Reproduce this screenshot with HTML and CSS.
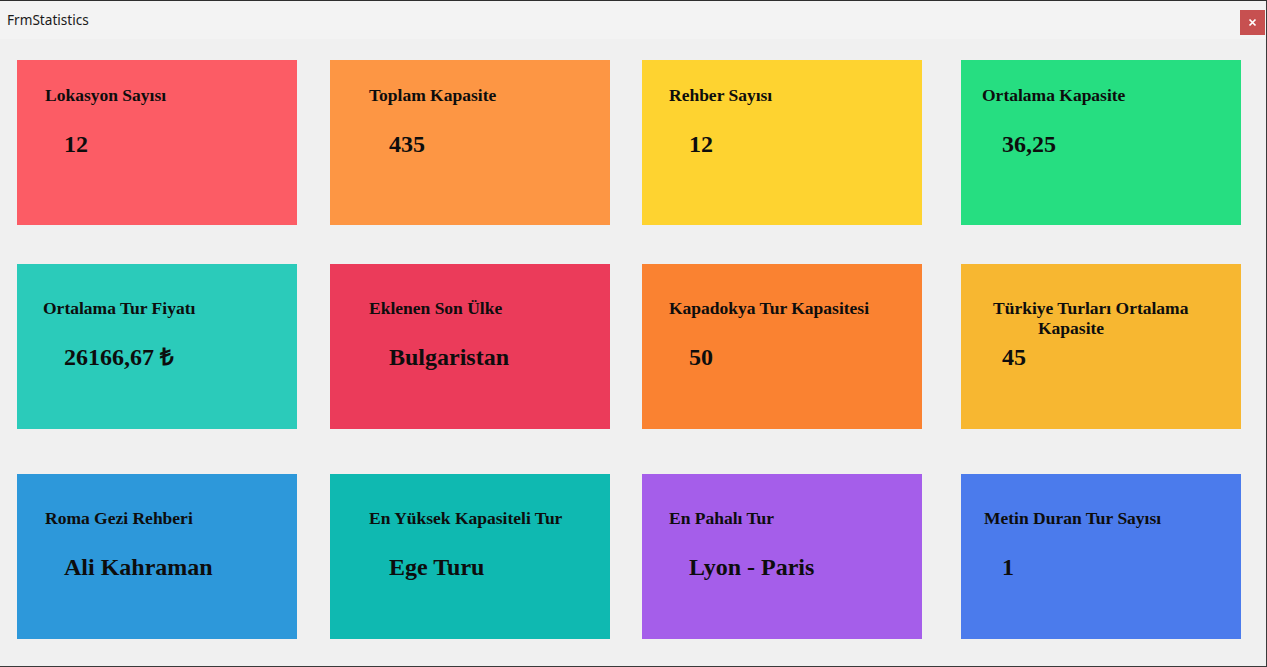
FILE: index.html
```html
<!DOCTYPE html>
<html lang="tr">
<head>
<meta charset="utf-8">
<title>FrmStatistics</title>
<link rel="stylesheet" href="styles.css">
</head>
<body>
<div class="window">
  <div class="titlebar">
    <span class="caption">FrmStatistics</span>
    <button class="close" aria-label="Kapat">
      <svg width="25" height="25" viewBox="0 0 25 25"><path d="M9.5 9.5 L15.5 15.5 M15.5 9.5 L9.5 15.5" stroke="#fff" stroke-width="1.7" fill="none"/></svg>
    </button>
  </div>
  <div class="grid">
    <div class="card r1 c1 red"><div class="title">Lokasyon Sayısı</div><div class="value">12</div></div>
    <div class="card r1 c2 orange"><div class="title">Toplam Kapasite</div><div class="value">435</div></div>
    <div class="card r1 c3 yellow"><div class="title">Rehber Sayısı</div><div class="value">12</div></div>
    <div class="card r1 c4 green"><div class="title">Ortalama Kapasite</div><div class="value">36,25</div></div>

    <div class="card r2 c1 teal t-left2"><div class="title">Ortalama Tur Fiyatı</div><div class="value">26166,67 ₺</div></div>
    <div class="card r2 c2 crimson"><div class="title">Eklenen Son Ülke</div><div class="value">Bulgaristan</div></div>
    <div class="card r2 c3 dorange"><div class="title">Kapadokya Tur Kapasitesi</div><div class="value">50</div></div>
    <div class="card r2 c4 amber t-wide"><div class="title">Türkiye Turları Ortalama<br><span class="indent">Kapasite</span></div><div class="value">45</div></div>

    <div class="card r3 c1 blue"><div class="title">Roma Gezi Rehberi</div><div class="value">Ali Kahraman</div></div>
    <div class="card r3 c2 sea"><div class="title">En Yüksek Kapasiteli Tur</div><div class="value">Ege Turu</div></div>
    <div class="card r3 c3 purple"><div class="title">En Pahalı Tur</div><div class="value">Lyon - Paris</div></div>
    <div class="card r3 c4 indigo t-left3"><div class="title">Metin Duran Tur Sayısı</div><div class="value">1</div></div>
  </div>
</div>
</body>
</html>
```

FILE: styles.css
```css
* { box-sizing: border-box; }
html, body { margin: 0; padding: 0; }
body {
  width: 1267px;
  height: 667px;
  overflow: hidden;
  background: #f0f0f0;
}
.window {
  width: 1267px;
  height: 667px;
  border-top: 1px solid #2e2e2e;
  border-right: 1px solid #3a3a3a;
  border-bottom: 1px solid #3a3a3a;
  background: #f0f0f0;
  display: flex;
  flex-direction: column;
}
.titlebar {
  height: 38px;
  background: #f3f3f3;
  display: flex;
  justify-content: space-between;
  align-items: flex-start;
  padding: 9px 1px 0 7px;
  flex: none;
}
.caption {
  font-family: "Noto Sans", "Open Sans", sans-serif;
  font-size: 13.6px;
  line-height: 18px;
  color: #1a1a1a;
  margin-top: 1px;
}
.close {
  width: 25px;
  height: 25px;
  padding: 0;
  border: 0;
  background: #c75050;
  display: block;
}
.close svg { display: block; }

.grid {
  display: grid;
  grid-template-columns: 313px 312px 319px 280px;
  grid-template-rows: 204px 210px 165px;
  padding: 21px 0 0 17px;
}
.card {
  width: 280px;
  height: 165px;
  font-family: "Liberation Serif", "Times New Roman", serif;
  font-weight: bold;
  color: #0d0d0d;
  padding-top: 34px;
  display: flex;
  flex-direction: column;
  align-items: flex-start;
}
.card.r1 { padding-top: 25px; }
.title {
  font-size: 17.5px;
  line-height: 20px;
  height: 20px;
  white-space: nowrap;
}
.value {
  font-size: 24px;
  line-height: 28px;
  margin-top: 25px;
  white-space: nowrap;
}
.indent { display: inline-block; padding-left: 45px; }

.c1 { padding-left: 28px; }
.c1 .value { margin-left: 19px; }
.c1.t-left2 { padding-left: 26px; }
.c1.t-left2 .value { margin-left: 21px; }
.c2 { padding-left: 39px; }
.c2 .value { margin-left: 20px; }
.c3 { padding-left: 27px; }
.c3 .value { margin-left: 20px; }
.c4 { padding-left: 21px; }
.c4 .value { margin-left: 20px; }
.c4.t-left3 { padding-left: 23px; }
.c4.t-left3 .value { margin-left: 18px; }
.c4.t-wide { padding-left: 32px; }
.c4.t-wide .value { margin-left: 9px; }

.red { background: #fc5c65; }
.orange { background: #fd9644; }
.yellow { background: #fed330; }
.green { background: #26de81; }
.teal { background: #2bcbba; }
.crimson { background: #eb3b5a; }
.dorange { background: #fa8231; }
.amber { background: #f7b731; }
.blue { background: #2d98da; }
.sea { background: #0fb9b1; }
.purple { background: #a55eea; }
.indigo { background: #4b7bec; }
```
